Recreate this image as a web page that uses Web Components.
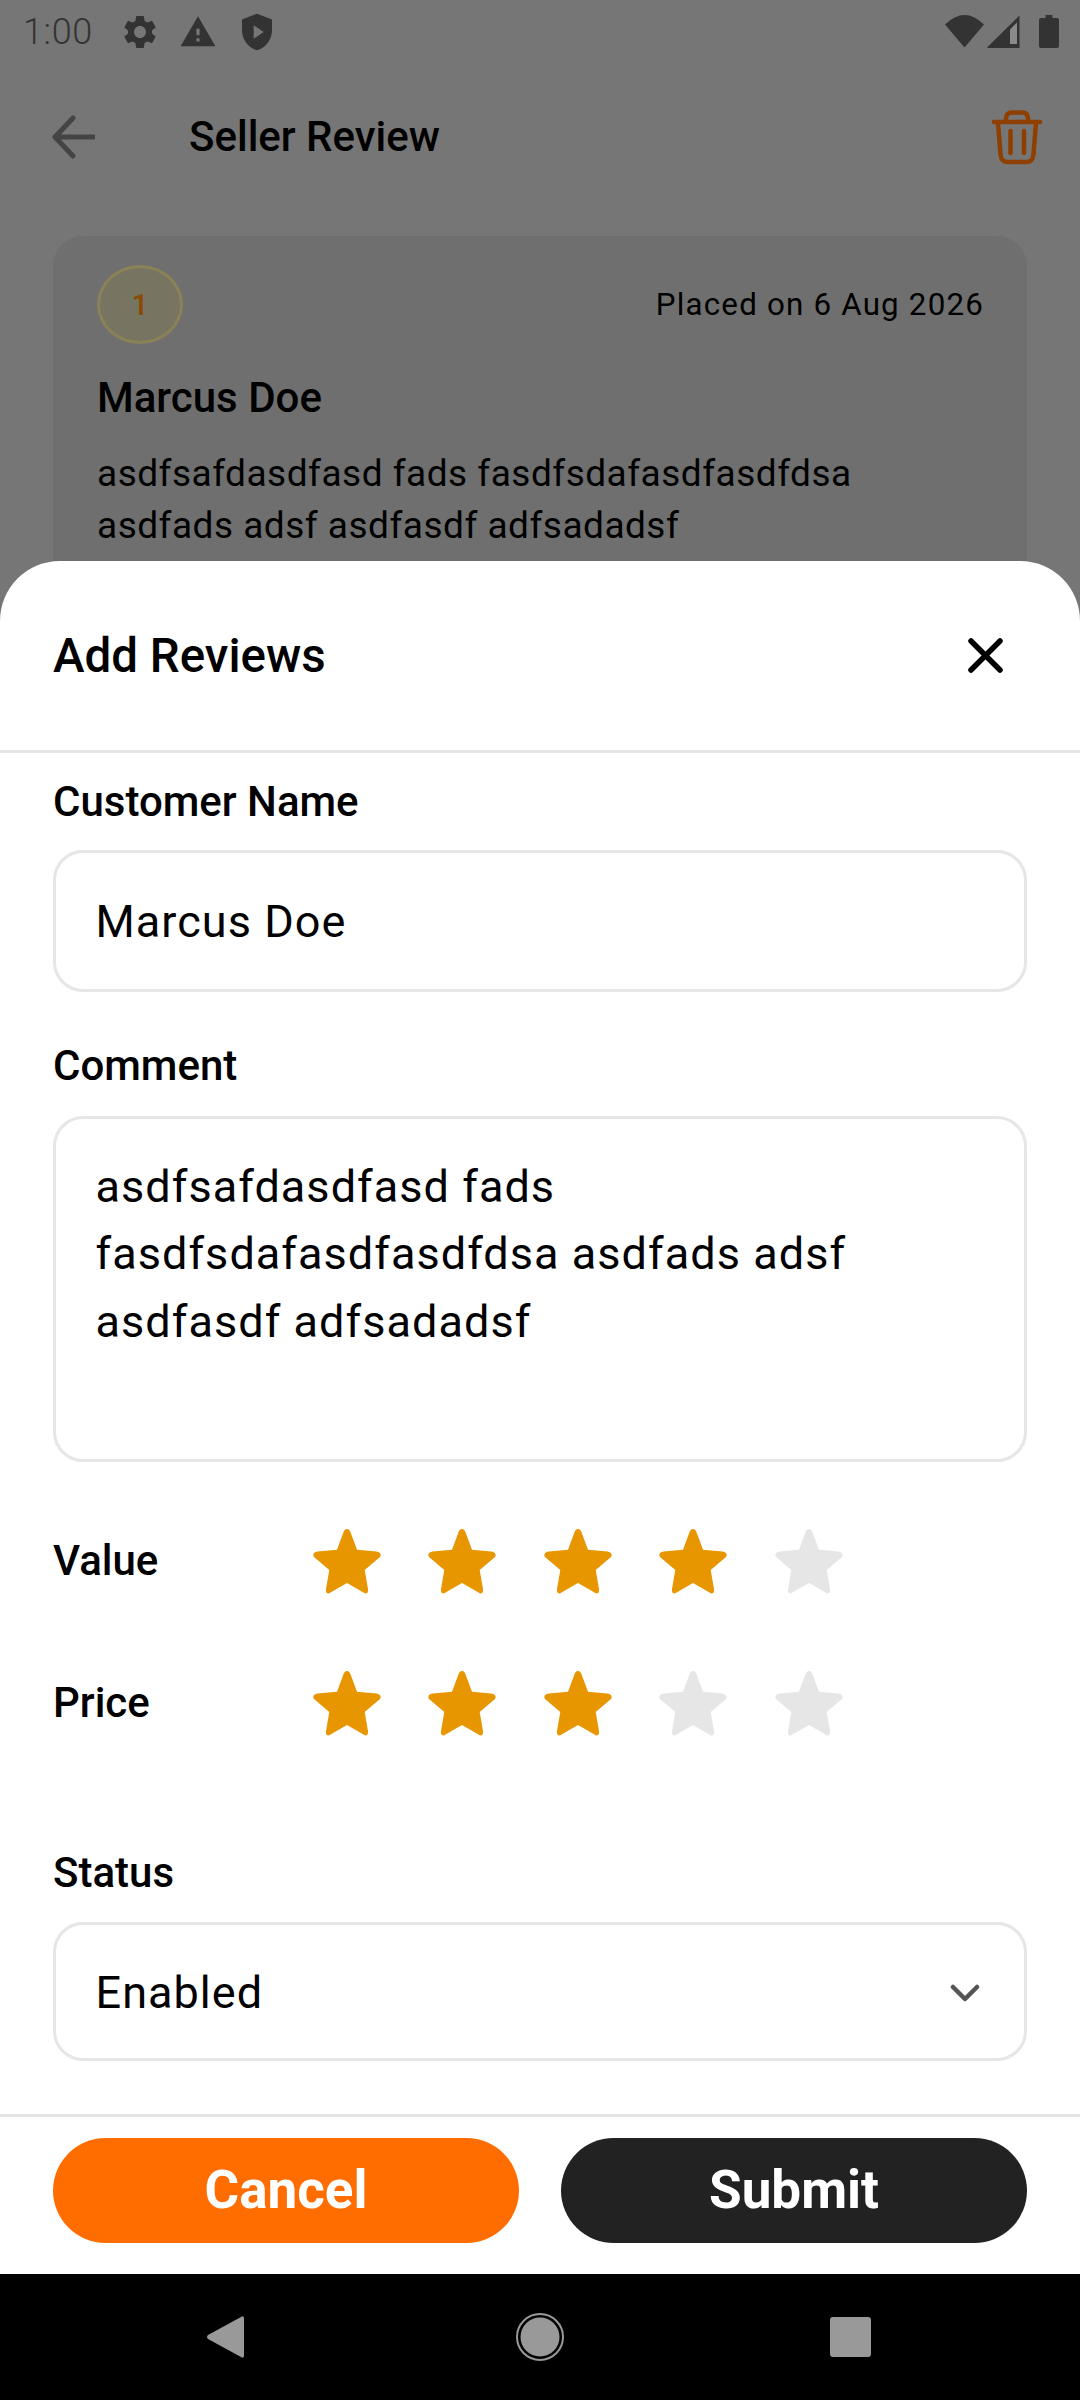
<!DOCTYPE html>
<html lang="en"><head><meta charset="utf-8"><title>Seller Review</title>
<style>
html,body{margin:0;padding:0;background:#767676;}
body{font-family:Roboto,"Noto Sans",sans-serif;color:#000;width:1080px;height:2400px;overflow:hidden;}
</style></head><body>
<review-screen>
  <status-bar></status-bar>
  <app-bar>Seller Review</app-bar>
  <review-card date="Placed on 6 Aug 2026" name="Marcus Doe" badge="1">asdfsafdasdfasd fads fasdfsdafasdfasdfdsa asdfads adsf asdfasdf adfsadadsf</review-card>
  <bottom-sheet heading="Add Reviews">
    <form-field label="Customer Name" style="margin-top:25px"><text-box h="142">Marcus Doe</text-box></form-field>
    <form-field label="Comment" style="margin-top:50px;gap:25.5px"><text-box h="346" multiline>asdfsafdasdfasd fads fasdfsdafasdfasdfdsa asdfads adsf asdfasdf adfsadadsf</text-box></form-field>
    <star-rating label="Value" value="4" style="margin-top:67px"></star-rating>
    <star-rating label="Price" value="3" style="margin-top:77px"></star-rating>
    <form-field label="Status" style="margin-top:113px;gap:25.5px"><text-box h="139" select>Enabled</text-box></form-field>
    <pill-button slot="footer" kind="cancel">Cancel</pill-button>
    <pill-button slot="footer" kind="submit">Submit</pill-button>
  </bottom-sheet>
  <nav-bar></nav-bar>
</review-screen>
<script>
function def(name, html, setup){
  customElements.define(name, class extends HTMLElement{
    connectedCallback(){
      if(this.shadowRoot) return;
      const r=this.attachShadow({mode:'open'});
      r.innerHTML=typeof html==='function'?html(this):html;
      if(setup) setup(this,r);
    }
  });
}
const esc=s=>(s||'');
def('review-screen',`<style>:host{display:flex;flex-direction:column;position:relative;width:1080px;height:2400px;overflow:hidden;background:#767676}</style><slot></slot>`);

def('status-bar',`<style>
:host{display:flex;align-items:center;height:63px;box-sizing:border-box;padding:0 21px 0 23px;color:#333;flex:none}
.time{font:300 36px/1 Roboto,sans-serif;letter-spacing:.6px;color:#333;width:72px;margin-right:33px}
svg{display:block;fill:#333}
.left{display:flex;align-items:center}
.right{margin-left:auto;display:flex;align-items:center}
</style>
<div class="left"><span class="time">1:00</span>
<svg width="40" height="40" viewBox="0 0 24 24" style="margin-left:-8px"><path d="M19.14 12.94c.04-.3.06-.61.06-.94 0-.32-.02-.64-.07-.94l2.03-1.58c.18-.14.23-.41.12-.61l-1.92-3.32c-.12-.22-.37-.29-.59-.22l-2.39.96c-.5-.38-1.03-.7-1.62-.94l-.36-2.54c-.04-.24-.24-.41-.48-.41h-3.84c-.24 0-.43.17-.47.41l-.36 2.54c-.59.24-1.13.57-1.62.94l-2.39-.96c-.22-.08-.47 0-.59.22L2.74 8.87c-.12.21-.08.47.12.61l2.03 1.58c-.05.3-.09.63-.09.94s.02.64.07.94l-2.03 1.58c-.18.14-.23.41-.12.61l1.92 3.32c.12.22.37.29.59.22l2.39-.96c.5.38 1.03.7 1.62.94l.36 2.54c.05.24.24.41.48.41h3.84c.24 0 .44-.17.47-.41l.36-2.54c.59-.24 1.13-.56 1.62-.94l2.39.96c.22.08.47 0 .59-.22l1.92-3.32c.12-.22.07-.47-.12-.61l-2.01-1.58zM12 15.6c-1.98 0-3.6-1.62-3.6-3.6s1.62-3.6 3.6-3.6 3.6 1.62 3.6 3.6-1.62 3.6-3.6 3.6z"/></svg>
<svg width="38" height="38" viewBox="0 0 24 24" style="margin-left:19px"><path d="M1 21h22L12 2 1 21zm12-3h-2v-2h2v2zm0-4h-2v-4h2v4z"/></svg>
<svg width="40" height="40" viewBox="0 0 24 24" style="margin-left:20px"><path fill-rule="evenodd" d="M12 1 3 4.5V11c0 5.5 3.8 10.7 9 12 5.2-1.3 9-6.5 9-12V4.5zM10 8v8l6-4z"/></svg></div>
<div class="right">
<svg width="39" height="33" viewBox="0 0 39 33"><path d="M0 9.500Q19.500-9.500 39 9.500L19.500 32.500z"/></svg>
<svg width="33" height="33" viewBox="0 0 33 33" style="margin-left:3px"><path d="M.5 32 32.500.5V33H.5z"/><path d="M23 14.500 30 7.500V29H23z" fill="#8a8a8a"/></svg>
<svg width="20" height="33" viewBox="0 0 20 33" style="margin-left:19px"><path d="M6.500 0h7v3H18a2 2 0 0 1 2 2v26a2 2 0 0 1-2 2H2a2 2 0 0 1-2-2V5a2 2 0 0 1 2-2h4.500z"/></svg>
</div>`);

def('app-bar',`<style>
:host{display:flex;align-items:center;height:147px;flex:none;box-sizing:border-box;padding:0 30px 0 52px}
.title{font:500 42px/1 Roboto,sans-serif;color:#000;margin-left:94px;flex:1}
svg{display:block;fill:none;stroke-linecap:round;stroke-linejoin:round}
</style>
<svg width="43" height="44" viewBox="0 0 43 44" stroke="#444" stroke-width="5"><path d="M42 22H3M21 3 3 22l18 19"/></svg>
<div class="title"><slot></slot></div>
<svg width="65" height="70" viewBox="0 0 65 70" stroke="#8f4000" stroke-width="4.500"><path d="M9 20H55M21 19v-2c0-5 3-6.500 6-6.500h10c3 0 6 1.500 6 6.500v2M13 21l2.500 31c.5 6 2.500 8 7.500 8h18c5 0 7-2 7.500-8L51 21M25.500 29v22M39 29v22"/></svg>`);

def('review-card',h=>`<style>
:host{display:block;margin:26px 53px 0;padding:29px 43px 40px 44px;background:#6f6f6f;border-radius:30px;flex:none;color:#000}
.top{display:flex;justify-content:space-between;align-items:center}
.badge{width:86px;height:79px;box-sizing:border-box;border-radius:50%;background:#787462;border:3px solid #8a8256;display:flex;align-items:center;justify-content:center;font:500 30px/1 Roboto,sans-serif;color:#8a4b00}
.date{font:400 31.300px/1 Roboto,sans-serif;letter-spacing:1.2px}
.name{font:500 42px/48px Roboto,sans-serif;margin-top:30px}
.text{font:400 37px/52px Roboto,sans-serif;letter-spacing:.5px;margin-top:26px;width:820px}
</style>
<div class="top"><div class="badge">${esc(h.getAttribute('badge'))}</div><div class="date">${esc(h.getAttribute('date'))}</div></div>
<div class="name">${esc(h.getAttribute('name'))}</div>
<div class="text"><slot></slot></div>`);

def('bottom-sheet',h=>`<style>
:host{position:absolute;left:0;right:0;top:561px;bottom:126px;display:flex;flex-direction:column;background:#fff;border-radius:60px 60px 0 0}
header{height:189px;flex:none;box-sizing:content-box;border-bottom:3px solid #e5e5e5;display:flex;align-items:center;justify-content:space-between;padding:0 77px 0 53px}
h2{margin:2px 0 0;font:500 47.500px/1 Roboto,sans-serif;color:#000}
svg{display:block;fill:none;stroke:#000;stroke-width:5.500;stroke-linecap:round}
.body{flex:1;display:flex;flex-direction:column;padding:0 53px;min-height:0}
footer{flex:none;border-top:3px solid #e5e5e5;display:flex;gap:42px;padding:21px 53px 31px}
</style>
<header><h2>${esc(h.getAttribute('heading'))}</h2><svg width="35" height="35" viewBox="0 0 35 35"><path d="M3 3l29 29M32 3 3 32"/></svg></header>
<div class="body"><slot></slot></div>
<footer><slot name="footer"></slot></footer>`);

def('form-field',h=>`<style>
:host{display:flex;flex-direction:column;gap:24px;flex:none}
label{display:block;font:500 42px/48px Roboto,sans-serif;color:#000}
</style><label>${esc(h.getAttribute('label'))}</label><slot></slot>`);

def('text-box',h=>`<style>
:host{display:flex;box-sizing:border-box;height:${h.getAttribute('h')}px;border:3px solid #e6e6e6;border-radius:30px;padding:${h.hasAttribute('multiline')?'34px':'2px'} 44px 0 39.500px;align-items:${h.hasAttribute('multiline')?'flex-start':'center'};justify-content:space-between;font:400 45px/67.500px Roboto,sans-serif;letter-spacing:1.050px;color:#000;background:#fff}
svg{display:block;flex:none;fill:none;stroke:#555;stroke-width:4.500;stroke-linecap:round;stroke-linejoin:round}
</style><div><slot></slot></div>${h.hasAttribute('select')?'<svg width="30" height="18" viewBox="0 0 30 18"><path d="M3 3l12 12L27 3"/></svg>':''}`);

const STAR='M34 0C36 0 37.200 2 37.800 4L44 20.700 63.500 22.500C67 23 68.700 25.500 67 28L51.700 41 55 60C55.500 64 53 66 50.500 63.500L34 54 17.500 63.500C15 66 12.500 64 13 60L16.300 41 1 28C-.7 25.500 1 23 4.500 22.500L24 20.700 30.200 4C30.800 2 32 0 34 0Z';
def('star-rating',h=>{
  const v=+h.getAttribute('value');let s='';
  for(let i=1;i<=5;i++)s+=`<svg width="68" height="65" viewBox="0 0 68 65"><path fill="${i<=v?'#e89600':'#e6e6e6'}" d="${STAR}"/></svg>`;
  return `<style>
:host{display:flex;align-items:center;height:65px;flex:none}
.l{width:260px;font:500 42px/1 Roboto,sans-serif;color:#000}
.s{display:flex;gap:47.500px;margin-left:-.5px}
svg{display:block}
</style><div class="l">${esc(h.getAttribute('label'))}</div><div class="s">${s}</div>`;
});

def('pill-button',h=>`<style>
:host{flex:1;display:flex;height:105px;align-items:center;justify-content:center;border-radius:53px;background:${h.getAttribute('kind')==='cancel'?'#ff6d00':'#222'};color:#fff;font:700 53px/1 Roboto,sans-serif}
</style><slot></slot>`);

def('nav-bar',`<style>
:host{position:absolute;left:0;right:0;bottom:0;height:126px;background:#000;display:flex;align-items:center;justify-content:space-between;padding:0 209px 0 207px;box-sizing:border-box}
svg{display:block;fill:#999}
</style>
<svg width="37" height="42" viewBox="0 0 37 42"><path d="M37 2.500V39.500C37 41.500 35.500 42.500 34 41L1 23C-.3 21.800-.3 20.200 1 19L34 1C35.500-.5 37 .5 37 2.500Z"/></svg>
<svg width="48" height="48" viewBox="0 0 48 48" style="margin-left:6px"><circle cx="24" cy="24" r="23" fill="none" stroke="#999" stroke-width="2"/><circle cx="24" cy="24" r="19.500"/></svg>
<svg width="41" height="40" viewBox="0 0 41 40"><rect width="41" height="40" rx="3"/></svg>`);
</script>
</body></html>
